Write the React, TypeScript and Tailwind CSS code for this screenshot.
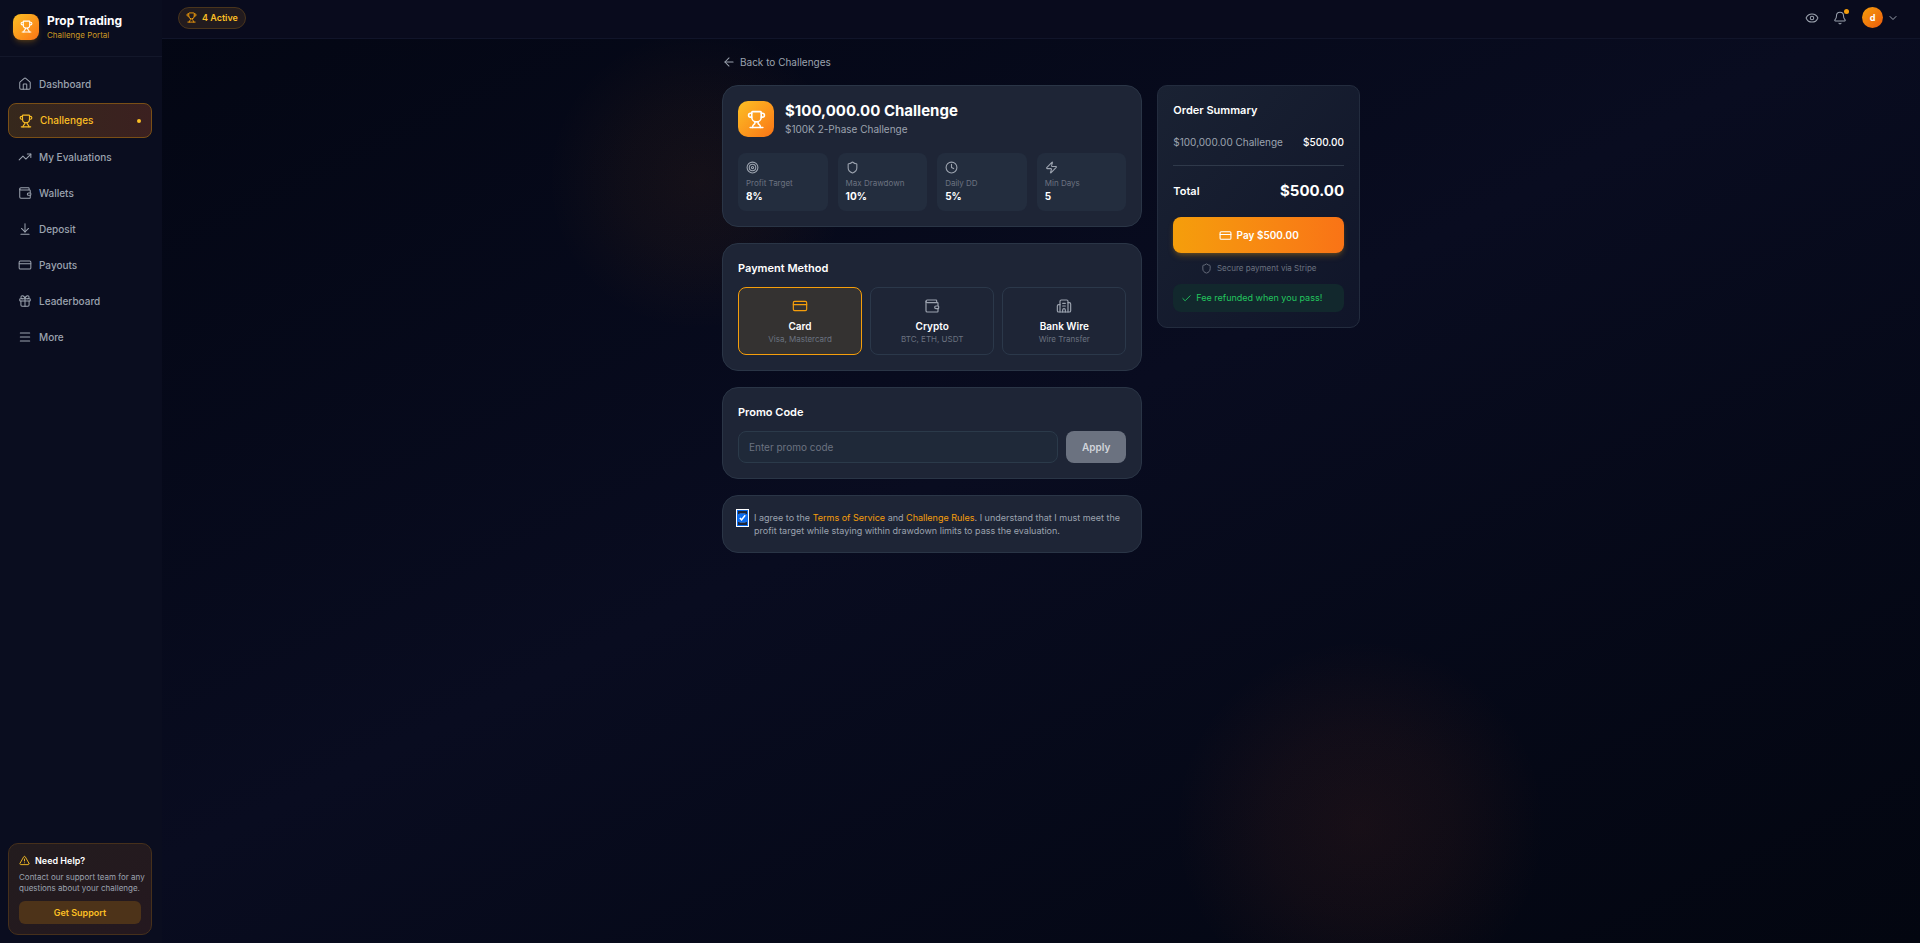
import { useState } from "react";
import {
  ArrowDownToLine,
  ArrowLeft,
  Bell,
  Building2,
  Check,
  ChevronDown,
  Clock,
  CreditCard,
  Eye,
  Gift,
  House,
  Menu,
  Shield,
  Target,
  TrendingUp,
  TriangleAlert,
  Trophy,
  Wallet,
  Zap,
} from "lucide-react";

const navItems = [
  { name: "Dashboard", icon: House },
  { name: "Challenges", icon: Trophy },
  { name: "My Evaluations", icon: TrendingUp },
  { name: "Wallets", icon: Wallet },
  { name: "Deposit", icon: ArrowDownToLine },
  { name: "Payouts", icon: CreditCard },
  { name: "Leaderboard", icon: Gift },
  { name: "More", icon: Menu },
];

const stats = [
  { label: "Profit Target", value: "8%", icon: Target },
  { label: "Max Drawdown", value: "10%", icon: Shield },
  { label: "Daily DD", value: "5%", icon: Clock },
  { label: "Min Days", value: "5", icon: Zap },
];

const methods = [
  { name: "Card", note: "Visa, Mastercard", icon: CreditCard },
  { name: "Crypto", note: "BTC, ETH, USDT", icon: Wallet },
  { name: "Bank Wire", note: "Wire Transfer", icon: Building2 },
];

const card = "rounded-2xl border border-[#2a3546] bg-[#1e2536] p-[15px]";

const Sidebar = () => {
  return (
    <aside className="flex w-[162px] shrink-0 flex-col bg-[#0a0d1f]">
      <div className="flex h-[57px] items-center gap-2 border-b border-[#13172a] px-[13px] pb-[3px]">
        <div className="flex size-[26px] items-center justify-center rounded-lg bg-linear-to-br from-[#fbbf24] to-[#f97316] shadow-md shadow-[#f59e0b]/20">
          <Trophy size={13} className="text-white" />
        </div>
        <div>
          <p className="text-[12px] leading-4 font-bold text-white">
            Prop Trading
          </p>
          <p className="text-[8px] leading-3 text-[#fbbf24]/80">
            Challenge Portal
          </p>
        </div>
      </div>
      <nav className="flex-1 pt-2.5 pr-2.5 pl-2">
        <ul className="space-y-0.5">
          {navItems.map(({ name, icon: Icon }) => {
            const active = name === "Challenges";
            return (
              <li key={name}>
                <a
                  href="#"
                  className={`flex items-center gap-[7px] rounded-lg px-2.5 text-[10px] font-medium ${
                    active
                      ? "h-[35px] border border-[#7a4f16] bg-linear-to-r from-[#36281c] to-[#3b2020] text-[#fbbf24]"
                      : "h-[34px] text-[#9ca3af]"
                  }`}
                >
                  <Icon size={14} strokeWidth={active ? 2 : 1.75} />
                  {name}
                  {active ? (
                    <span className="ml-auto size-1 rounded-full bg-[#fbbf24]"></span>
                  ) : null}
                </a>
              </li>
            );
          })}
        </ul>
      </nav>
      <div className="my-2 mr-2.5 ml-2 rounded-[10px] border border-[#46301b] bg-linear-to-br from-[#231c1e] to-[#24181f] p-2.5">
        <p className="flex items-center gap-[5px] text-[9px] leading-3.5 font-semibold text-white">
          <TriangleAlert size={11} className="text-[#fbbf24]" />
          Need Help?
        </p>
        <p className="my-1 text-[8px] leading-[11px] whitespace-nowrap text-[#9ca3af]">
          Contact our support team for any
          <br />
          questions about your challenge.
        </p>
        <button className="h-[23px] w-full rounded-md bg-[#4d3319] text-[9px] font-semibold text-[#fbbf24]">
          Get Support
        </button>
      </div>
    </aside>
  );
};

const Header = () => {
  return (
    <header className="relative flex h-[39px] shrink-0 items-center justify-between border-b border-[#11152a] bg-[#090b1d] px-4 pb-[3px]">
      <div className="flex h-[22px] items-center gap-[5px] rounded-full border border-[#4a351c] bg-[#221b1e] px-[7px] text-[9px] font-semibold text-[#fbbf24]">
        <Trophy size={11} className="text-[#f59e0b]" />4 Active
      </div>
      <div className="flex items-center text-[#9ca3af]">
        <button aria-label="Preview" className="mr-3.5">
          <Eye size={14} strokeWidth={1.75} />
        </button>
        <button aria-label="Notifications" className="relative mr-[15px]">
          <Bell size={14} strokeWidth={1.75} />
          <span className="absolute -top-[2px] -right-[2px] size-[5px] rounded-full bg-[#f59e0b]"></span>
        </button>
        <button aria-label="Account" className="flex items-center gap-1 pr-[5px]">
          <span className="flex size-[21px] items-center justify-center rounded-full bg-linear-to-br from-[#f59e0b] to-[#ea580c] text-[9px] font-bold text-white">
            d
          </span>
          <ChevronDown size={12} />
        </button>
      </div>
    </header>
  );
};

const ChallengeCard = () => {
  return (
    <section className={card}>
      <div className="mb-4 flex items-center gap-[11px]">
        <div className="flex size-9 items-center justify-center rounded-[10px] bg-linear-to-br from-[#fbbf24] to-[#f97316]">
          <Trophy size={19} className="text-white" />
        </div>
        <div>
          <h1 className="text-[15px] leading-5 font-bold text-white">
            $100,000.00 Challenge
          </h1>
          <p className="text-[10px] leading-4 text-[#9ca3af]">
            $100K 2-Phase Challenge
          </p>
        </div>
      </div>
      <div className="grid grid-cols-4 gap-2.5">
        {stats.map(({ label, value, icon: Icon }) => (
          <div key={label} className="rounded-lg bg-[#232d3e] p-2">
            <Icon size={13} className="mb-[3px] text-[#9ca3af]" />
            <p className="text-[8px] leading-3 text-[#6b7280]">{label}</p>
            <p className="text-[10px] leading-3.5 font-bold text-white">
              {value}
            </p>
          </div>
        ))}
      </div>
    </section>
  );
};

const PaymentMethods = () => {
  const [method, setMethod] = useState("Card");
  return (
    <section className={card}>
      <h2 className="mb-2.5 text-[11px] leading-[18px] font-semibold text-white">
        Payment Method
      </h2>
      <div className="grid grid-cols-3 gap-2">
        {methods.map(({ name, note, icon: Icon }) => (
          <button
            key={name}
            onClick={() => setMethod(name)}
            className={`flex flex-col items-center rounded-lg border pt-2.5 pb-[9px] ${
              method === name
                ? "border-[#f59e0b] bg-[#343231]"
                : "border-[#2b384a]"
            }`}
          >
            <Icon
              size={16}
              strokeWidth={1.75}
              className={`mb-[5px] ${
                method === name ? "text-[#f59e0b]" : "text-[#9ca3af]"
              }`}
            />
            <span className="text-[10px] leading-3.5 font-semibold text-white">
              {name}
            </span>
            <span className="text-[8px] leading-3 text-[#6b7280]">{note}</span>
          </button>
        ))}
      </div>
    </section>
  );
};

const PromoCode = () => {
  return (
    <section className={card}>
      <h2 className="mb-2.5 text-[11px] leading-[18px] font-semibold text-white">
        <label htmlFor="promo">Promo Code</label>
      </h2>
      <div className="flex gap-2">
        <input
          id="promo"
          type="text"
          placeholder="Enter promo code"
          className="h-8 min-w-0 flex-1 rounded-lg border border-[#2b3a4a] bg-[#1f2939] px-2.5 text-[10px] text-white placeholder:text-[#6b7280]"
        />
        <button className="h-8 rounded-lg bg-[#6b7280] px-4 text-[10px] font-semibold text-[#d1d5db]">
          Apply
        </button>
      </div>
    </section>
  );
};

const Terms = () => {
  const [agreed, setAgreed] = useState(true);
  return (
    <section className={`${card} flex items-start gap-[7px]`}>
      <input
        id="terms"
        type="checkbox"
        checked={agreed}
        onChange={() => setAgreed(!agreed)}
        className="h-3.5 w-[9px] shrink-0 rounded-[2px] accent-[#0b6cf0] ring-1 ring-[#0b6cf0] outline outline-offset-1 outline-white"
      />
      <label htmlFor="terms" className="text-[9px] leading-[13px] text-[#9ca3af]">
        I agree to the{" "}
        <a href="#" className="text-[#f59e0b]">
          Terms of Service
        </a>{" "}
        and{" "}
        <a href="#" className="text-[#f59e0b]">
          Challenge Rules
        </a>
        . I understand that I must meet the profit target while staying within
        drawdown limits to pass the evaluation.
      </label>
    </section>
  );
};

const OrderSummary = () => {
  return (
    <section className="self-start rounded-[10px] border border-[#232c3e] bg-linear-to-br from-[#1a2233] to-[#101529] p-[15px]">
      <h2 className="text-[11px] leading-[18px] font-semibold text-white">
        Order Summary
      </h2>
      <div className="mt-4 flex justify-between border-b border-[#2f394a] pb-4 text-[10px] leading-3.5">
        <span className="text-[#9ca3af]">$100,000.00 Challenge</span>
        <span className="font-medium text-white">$500.00</span>
      </div>
      <div className="mt-[15px] flex justify-between leading-5 text-white">
        <span className="text-[11px] font-semibold">Total</span>
        <span className="text-[15px] font-bold">$500.00</span>
      </div>
      <button className="mt-4 flex h-9 w-full items-center justify-center gap-[5px] rounded-lg bg-linear-to-r from-[#f59e0b] to-[#f97316] text-[10px] font-semibold text-white shadow-md shadow-[#f59e0b]/25">
        <CreditCard size={13} />
        Pay $500.00
      </button>
      <p className="mt-[9px] flex items-center justify-center gap-[5px] text-[8px] leading-3 text-[#6b7280]">
        <Shield size={11} />
        Secure payment via Stripe
      </p>
      <p className="mt-2.5 flex h-7 items-center gap-1 rounded-lg bg-[#12282d] px-2 text-[9px] text-[#22c55e]">
        <Check size={11} />
        Fee refunded when you pass!
      </p>
    </section>
  );
};

const App = () => {
  return (
    <div className="flex min-h-screen bg-linear-to-br from-[#030612] via-[#090c20] to-[#030610] font-['Inter',sans-serif]">
      <Sidebar />
      <div className="relative flex min-w-0 flex-1 flex-col overflow-hidden">
        {/* warm glows behind the page */}
        <div className="pointer-events-none absolute top-[30px] left-[386px] size-[300px] rounded-full bg-[radial-gradient(closest-side,#f5800b10,#f5800b0a_50%,transparent)]"></div>
        <div className="pointer-events-none absolute top-[640px] left-[1013px] size-[370px] rounded-full bg-[radial-gradient(closest-side,#f0602014,#f060200d_50%,transparent)]"></div>
        <Header />
        <main className="relative mx-auto w-full max-w-[638px] flex-1 pt-[15px] pb-4">
          <a
            href="#"
            className="mb-[15px] flex w-fit items-center gap-1 text-[10px] leading-4 text-[#9ca3af]"
          >
            <ArrowLeft size={14} strokeWidth={1.75} />
            Back to Challenges
          </a>
          <div className="grid grid-cols-3 gap-[15px]">
            <div className="col-span-2 space-y-4">
              <ChallengeCard />
              <PaymentMethods />
              <PromoCode />
              <Terms />
            </div>
            <OrderSummary />
          </div>
        </main>
      </div>
    </div>
  );
};

export default App;
